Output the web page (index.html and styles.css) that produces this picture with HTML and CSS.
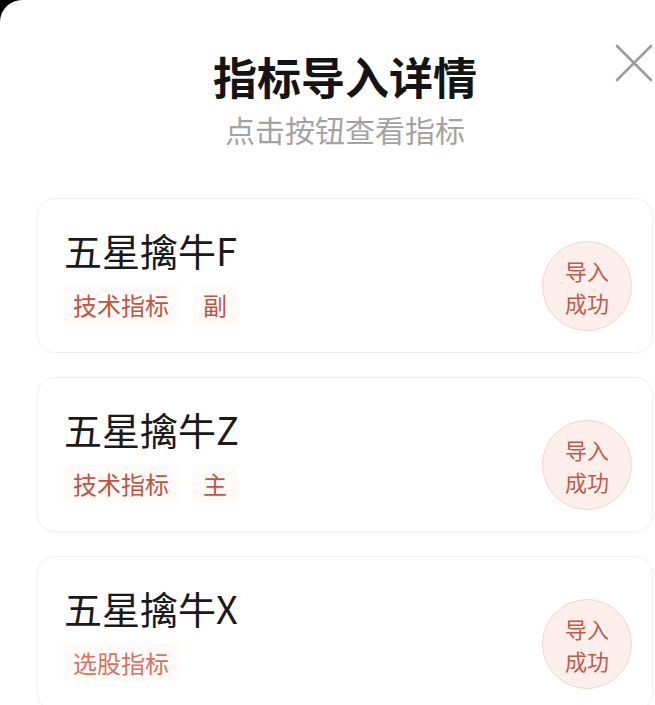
FILE: index.html
```html
<!DOCTYPE html>
<html>
<head>
    <meta charset="utf-8">
    <title>指标导入详情</title>
    <link rel="stylesheet" href="styles.css">
</head>
<body>
    <div class="sheet">
        <div class="header">
            <h1 class="title">指标导入详情</h1>
            <p class="subtitle">点击按钮查看指标</p>
            <button class="close" type="button" aria-label="关闭">
                <svg width="38" height="38" viewBox="0 0 38 38">
                    <path d="M2 2 L36 36 M36 2 L2 36" stroke="#9c9c9c" stroke-width="2.6" stroke-linecap="round" fill="none"/>
                </svg>
            </button>
        </div>

        <div class="list">
            <div class="card">
                <div class="info">
                    <div class="name">五星擒牛F</div>
                    <div class="tags">
                        <span class="tag">技术指标</span>
                        <span class="tag">副</span>
                    </div>
                </div>
                <div class="status"><span>导入</span><span>成功</span></div>
            </div>

            <div class="card">
                <div class="info">
                    <div class="name">五星擒牛Z</div>
                    <div class="tags">
                        <span class="tag">技术指标</span>
                        <span class="tag">主</span>
                    </div>
                </div>
                <div class="status"><span>导入</span><span>成功</span></div>
            </div>

            <div class="card">
                <div class="info">
                    <div class="name">五星擒牛X</div>
                    <div class="tags">
                        <span class="tag light">选股指标</span>
                    </div>
                </div>
                <div class="status"><span>导入</span><span>成功</span></div>
            </div>
        </div>
    </div>
</body>
</html>
```

FILE: styles.css
```css
body {
    margin: 0;
    background-color: #000;
    font-family: "Noto Sans CJK SC", "Noto Sans", sans-serif;
}

.sheet {
    background-color: #fff;
    border-top-left-radius: 22px;
    min-height: 705px;
    padding: 50px 2px 0 37px;
    box-sizing: border-box;
    overflow: hidden;
}

.header {
    position: relative;
    text-align: center;
}

.title {
    margin: 0;
    font-size: 44px;
    line-height: 53px;
    font-weight: 700;
    color: #141414;
}

.subtitle {
    margin: 8px 0 0;
    font-size: 30px;
    line-height: 36px;
    color: #a3a3a3;
}

.close {
    position: absolute;
    top: -6px;
    right: 0;
    padding: 0;
    border: none;
    background: none;
}

.list {
    display: flex;
    flex-direction: column;
    gap: 24px;
    margin-top: 51px;
}

.card {
    display: flex;
    justify-content: space-between;
    height: 155px;
    box-sizing: border-box;
    padding: 28px 20px 0 25px;
    border: 1px solid #f0f0f0;
    border-radius: 18px;
    box-shadow: 0 1px 4px rgba(0, 0, 0, 0.03);
}

.name {
    padding-left: 1px;
    font-size: 38px;
    line-height: 45px;
    color: #1a1a1a;
}

.tags {
    display: flex;
    gap: 14px;
    margin-top: 14px;
}

.tag {
    padding: 4px 10px;
    font-size: 24px;
    line-height: 29px;
    color: #c4533f;
    background-color: #fefaf8;
}

.tag.light {
    color: #d9735e;
}

.status {
    align-self: center;
    margin-top: -8px;
    width: 90px;
    height: 90px;
    box-sizing: border-box;
    border: 1px solid #f1d5cd;
    border-radius: 50%;
    background-color: #fcefeb;
    display: flex;
    flex-direction: column;
    align-items: center;
    justify-content: center;
    font-size: 22px;
    line-height: 32px;
    color: #c25a48;
}
```
